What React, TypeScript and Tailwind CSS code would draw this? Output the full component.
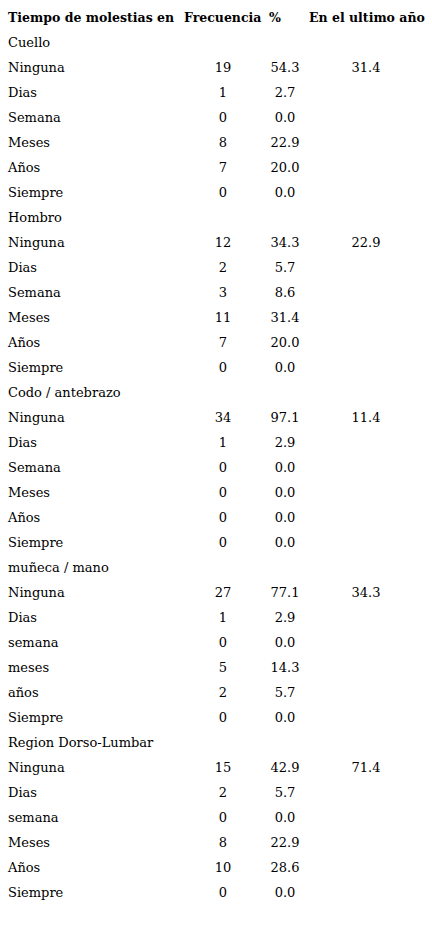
import React from "react";

const groups: { title: string; rows: [string, string, string, string?][] }[] = [
  {
    title: "Cuello",
    rows: [
      ["Ninguna", "19", "54.3", "31.4"],
      ["Dias", "1", "2.7"],
      ["Semana", "0", "0.0"],
      ["Meses", "8", "22.9"],
      ["Años", "7", "20.0"],
      ["Siempre", "0", "0.0"],
    ],
  },
  {
    title: "Hombro",
    rows: [
      ["Ninguna", "12", "34.3", "22.9"],
      ["Dias", "2", "5.7"],
      ["Semana", "3", "8.6"],
      ["Meses", "11", "31.4"],
      ["Años", "7", "20.0"],
      ["Siempre", "0", "0.0"],
    ],
  },
  {
    title: "Codo / antebrazo",
    rows: [
      ["Ninguna", "34", "97.1", "11.4"],
      ["Dias", "1", "2.9"],
      ["Semana", "0", "0.0"],
      ["Meses", "0", "0.0"],
      ["Años", "0", "0.0"],
      ["Siempre", "0", "0.0"],
    ],
  },
  {
    title: "muñeca / mano",
    rows: [
      ["Ninguna", "27", "77.1", "34.3"],
      ["Dias", "1", "2.9"],
      ["semana", "0", "0.0"],
      ["meses", "5", "14.3"],
      ["años", "2", "5.7"],
      ["Siempre", "0", "0.0"],
    ],
  },
  {
    title: "Region Dorso-Lumbar",
    rows: [
      ["Ninguna", "15", "42.9", "71.4"],
      ["Dias", "2", "5.7"],
      ["semana", "0", "0.0"],
      ["Meses", "8", "22.9"],
      ["Años", "10", "28.6"],
      ["Siempre", "0", "0.0"],
    ],
  },
];

const grid = "grid grid-cols-[180px_86px_38px_124px] h-[25px] items-center";

export default function App() {
  return (
    <div className="bg-white w-[432px] h-[925px] pt-[5px] text-black text-[13px] leading-[25px] font-['DejaVu_Serif',serif]">
      <div className={grid + " font-bold text-[12.5px]"}>
        <div className="pl-2 whitespace-nowrap">Tiempo de molestias en</div>
        <div className="pl-1 whitespace-nowrap">Frecuencia</div>
        <div className="pl-[3px]">%</div>
        <div className="pl-[5px] whitespace-nowrap">En el ultimo año</div>
      </div>
      {groups.map((g) => (
        <div key={g.title}>
          <div className={grid}>
            <div className="pl-2 whitespace-nowrap">{g.title}</div>
          </div>
          {g.rows.map((r, i) => (
            <div key={i} className={grid}>
              <div className="pl-2">{r[0]}</div>
              <div className="text-center">{r[1]}</div>
              <div className="text-center">{r[2]}</div>
              <div className="text-center">{r[3] ?? ""}</div>
            </div>
          ))}
        </div>
      ))}
    </div>
  );
}
